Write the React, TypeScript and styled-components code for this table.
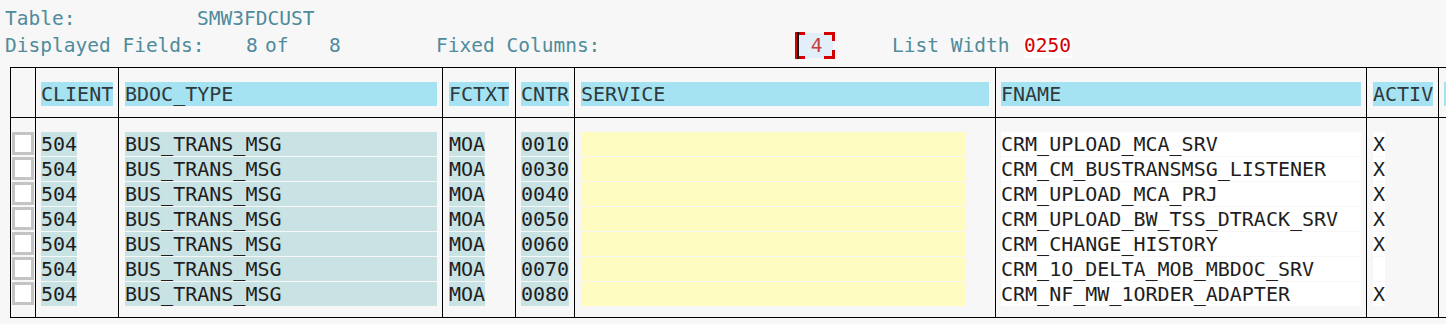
import React from 'react'
import styled, { createGlobalStyle } from 'styled-components'

const GlobalStyle = createGlobalStyle`
  html, body {
    margin: 0;
    background: #f7f7f7;
  }
  body {
    font-family: 'DejaVu Sans Mono', 'Liberation Mono', monospace;
  }
`

const CHAR = 12

const Page = styled.div`
  width: 1446px;
  height: 324px;
  overflow: hidden;
  background: #f7f7f7;
`

const Info = styled.div`
  padding: 6px 0 0 5px;
  height: 52px;
`

const InfoLine = styled.div<{ $cols: string }>`
  display: grid;
  grid-template-columns: ${p => p.$cols};
  align-items: center;
  height: 26px;
  font-size: 19.5px;
  line-height: 26px;
  color: #4f8b9b;
  white-space: pre;
`

const Red = styled.span`
  display: inline-block;
  width: ${4 * CHAR}px;
  height: 24px;
  line-height: 24px;
  background: #ffffff;
  color: #d20000;
`

const red = '#d40000'

const FixedBox = styled.span`
  display: inline-flex;
  align-items: center;
  justify-content: center;
  width: 40px;
  height: 27px;
  padding-left: 3px;
  box-sizing: border-box;
  color: #c83c3c;
  background:
    linear-gradient(#111, #111) 2px 0 / 2px 100% no-repeat,
    linear-gradient(${red}, ${red}) left top / 10px 3px no-repeat,
    linear-gradient(${red}, ${red}) left top / 3px 100% no-repeat,
    linear-gradient(${red}, ${red}) right top / 11px 3px no-repeat,
    linear-gradient(${red}, ${red}) right top / 3px 9px no-repeat,
    linear-gradient(${red}, ${red}) left bottom / 10px 3px no-repeat,
    linear-gradient(${red}, ${red}) right bottom / 11px 3px no-repeat,
    linear-gradient(${red}, ${red}) right bottom / 3px 9px no-repeat,
    linear-gradient(#e3eff8, #e3eff8) 4px 1px / 34px 25px no-repeat;
`

const Table = styled.div`
  display: flex;
  width: max-content;
  margin: 9px 0 0 10px;
  border-top: 1px solid #000;
  border-bottom: 1px solid #000;
  border-left: 1px solid #000;
  font-size: 20px;
`

const Column = styled.div<{ $w: number }>`
  display: flex;
  flex-direction: column;
  flex: 0 0 ${p => p.$w}px;
  width: ${p => p.$w}px;
  box-sizing: border-box;
  border-right: 1px solid #000;
`

const HeadCell = styled.div<{ $pad: number }>`
  height: 50px;
  box-sizing: border-box;
  padding: 14px 0 0 ${p => p.$pad}px;
  border-bottom: 1px solid #000;
`

const BodyCell = styled.div<{ $pad: number }>`
  display: flex;
  flex-direction: column;
  gap: 1px;
  height: 199px;
  box-sizing: border-box;
  padding: 14px 0 10px ${p => p.$pad}px;
`

type Tone = 'head' | 'key' | 'input' | 'plain'

const tones: Record<Tone, string> = {
  head: '#a6e3f2',
  key: '#c9e2e3',
  input: '#fffcc2',
  plain: '#ffffff',
}

const Field = styled.div<{ $chars: number; $tone: Tone }>`
  width: ${p => p.$chars * CHAR}px;
  height: 24px;
  padding-top: 1px;
  box-sizing: border-box;
  line-height: 23px;
  background: ${p => tones[p.$tone]};
  color: ${p => (p.$tone === 'head' ? '#2e3a3c' : '#1e1e1e')};
  white-space: pre;
  overflow: hidden;
`

const Check = styled.div`
  width: 22px;
  height: 23px;
  margin-bottom: 1px;
  box-sizing: border-box;
  border: 3px solid #c4c4c4;
  background: #ffffff;
`

const rows = [
  { cntr: '0010', fname: 'CRM_UPLOAD_MCA_SRV', activ: 'X' },
  { cntr: '0030', fname: 'CRM_CM_BUSTRANSMSG_LISTENER', activ: 'X' },
  { cntr: '0040', fname: 'CRM_UPLOAD_MCA_PRJ', activ: 'X' },
  { cntr: '0050', fname: 'CRM_UPLOAD_BW_TSS_DTRACK_SRV', activ: 'X' },
  { cntr: '0060', fname: 'CRM_CHANGE_HISTORY', activ: 'X' },
  { cntr: '0070', fname: 'CRM_1O_DELTA_MOB_MBDOC_SRV', activ: '' },
  { cntr: '0080', fname: 'CRM_NF_MW_1ORDER_ADAPTER', activ: 'X' },
]

type Row = (typeof rows)[number]

interface Col {
  title: string
  width: number
  pad: number
  head: number
  field: number
  tone: Tone
  value: (r: Row) => string
}

const columns: Col[] = [
  { title: 'CLIENT', width: 83, pad: 5, head: 6, field: 3, tone: 'key', value: () => '504' },
  { title: 'BDOC_TYPE', width: 324, pad: 6, head: 26, field: 26, tone: 'key', value: () => 'BUS_TRANS_MSG' },
  { title: 'FCTXT', width: 73, pad: 6, head: 5, field: 3, tone: 'key', value: () => 'MOA' },
  { title: 'CNTR', width: 59, pad: 5, head: 4, field: 4, tone: 'key', value: r => r.cntr },
  { title: 'SERVICE', width: 421, pad: 6, head: 34, field: 32, tone: 'input', value: () => '' },
  { title: 'FNAME', width: 371, pad: 5, head: 30, field: 30, tone: 'plain', value: r => r.fname },
  { title: 'ACTIV', width: 72, pad: 6, head: 5, field: 1, tone: 'plain', value: r => r.activ },
  { title: '', width: 120, pad: 5, head: 10, field: 0, tone: 'plain', value: () => '' },
]

export default function App() {
  return (
    <Page>
      <GlobalStyle />
      <Info>
        <InfoLine $cols="192px auto">
          <span>Table:</span>
          <span>SMW3FDCUST</span>
        </InfoLine>
        <InfoLine $cols="241px 19px 64px 107px 359px 97px 132px auto">
          <span>Displayed Fields:</span>
          <span>8</span>
          <span>of</span>
          <span>8</span>
          <span>Fixed Columns:</span>
          <span>
            <FixedBox>4</FixedBox>
          </span>
          <span>List Width</span>
          <span>
            <Red>0250</Red>
          </span>
        </InfoLine>
      </Info>

      <Table>
        <Column $w={25}>
          <HeadCell $pad={1} />
          <BodyCell $pad={1}>
            {rows.map(r => (
              <Check key={r.cntr} />
            ))}
          </BodyCell>
        </Column>
        {columns.map(c => (
          <Column key={c.title || 'more'} $w={c.width}>
            <HeadCell $pad={c.pad}>
              <Field $chars={c.head} $tone="head">
                {c.title}
              </Field>
            </HeadCell>
            <BodyCell $pad={c.pad}>
              {c.field > 0 &&
                rows.map(r => (
                  <Field key={r.cntr} $chars={c.field} $tone={c.tone}>
                    {c.value(r)}
                  </Field>
                ))}
            </BodyCell>
          </Column>
        ))}
      </Table>
    </Page>
  )
}
